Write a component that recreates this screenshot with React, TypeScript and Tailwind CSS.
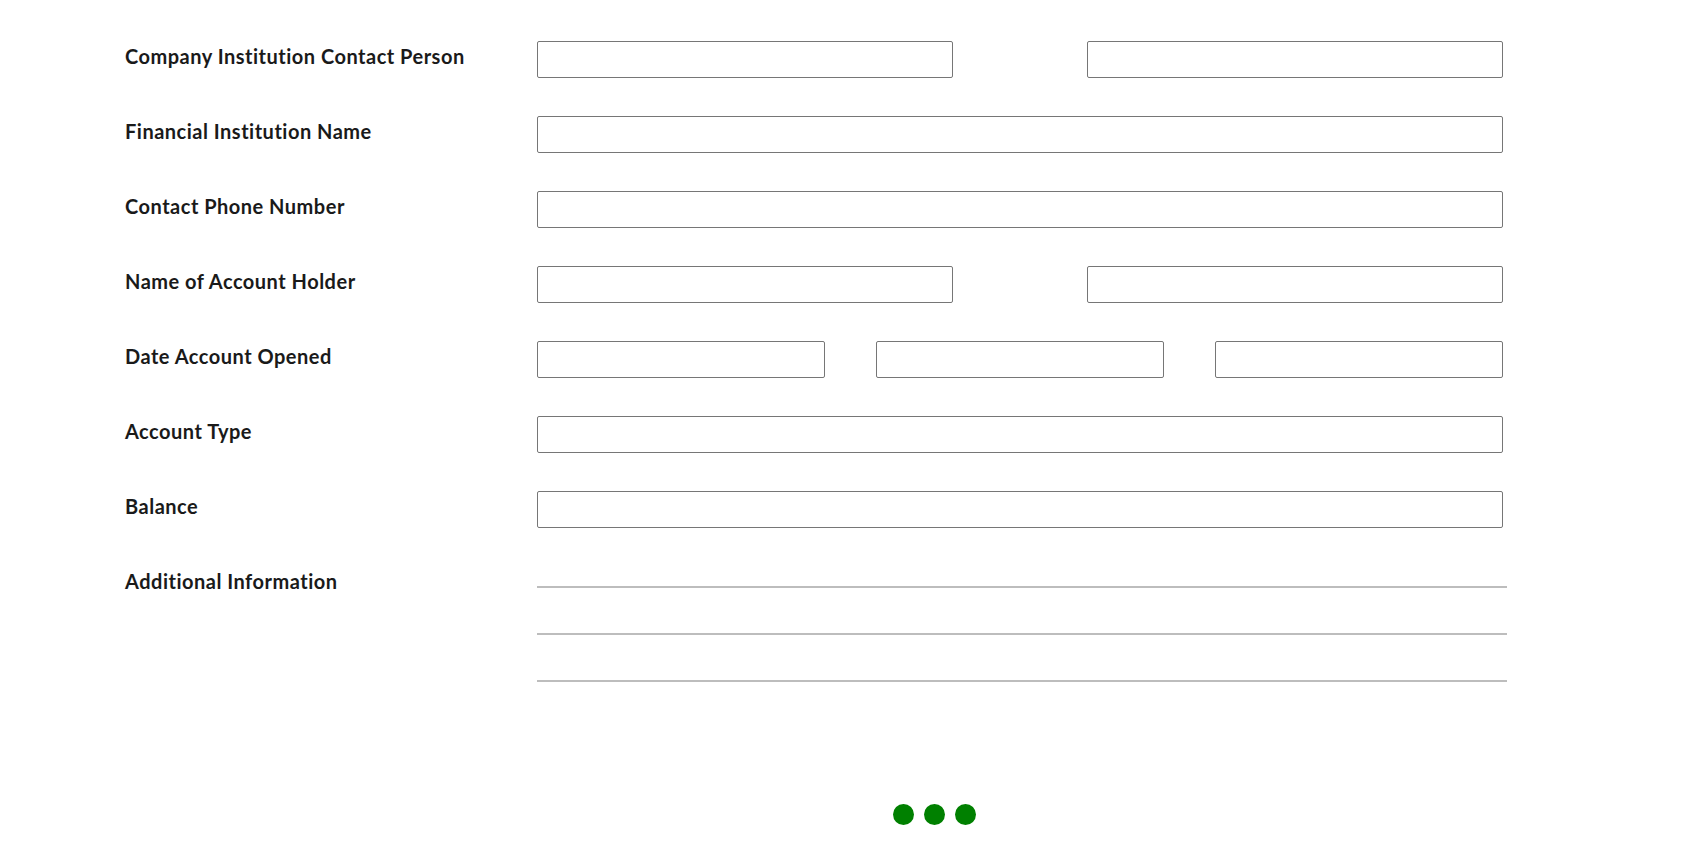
import React from "react";

const labelCls =
  "w-[412px] shrink-0 pt-[1px] text-[20px] leading-[28px] tracking-[0.5px] font-bold text-[#1a1a1a]";
const inputCls =
  "h-[37px] border border-[#767676] rounded-[2px] bg-white";

function Row({ label, children }: { label: string; children: React.ReactNode }) {
  return (
    <div className="flex items-start">
      <div className={labelCls}>{label}</div>
      <div className="w-[966px]">{children}</div>
    </div>
  );
}

function Full() {
  return <div className={`${inputCls} w-full`} />;
}

function Two() {
  return (
    <div className="flex justify-between">
      <div className={`${inputCls} w-[416px]`} />
      <div className={`${inputCls} w-[416px]`} />
    </div>
  );
}

function Three() {
  return (
    <div className="flex gap-[51px]">
      <div className={`${inputCls} w-[288px]`} />
      <div className={`${inputCls} w-[288px]`} />
      <div className={`${inputCls} w-[288px]`} />
    </div>
  );
}

export default function App() {
  return (
    <div
      className="min-h-[856px] bg-white pt-[41px] pl-[125px]"
      style={{ fontFamily: "Lato, 'Open Sans', sans-serif" }}
    >
      <div className="flex flex-col gap-[38px]">
        <Row label="Company Institution Contact Person">
          <Two />
        </Row>
        <Row label="Financial Institution Name">
          <Full />
        </Row>
        <Row label="Contact Phone Number">
          <Full />
        </Row>
        <Row label="Name of Account Holder">
          <Two />
        </Row>
        <Row label="Date Account Opened">
          <Three />
        </Row>
        <Row label="Account Type">
          <Full />
        </Row>
        <Row label="Balance">
          <Full />
        </Row>
        <div className="flex items-start">
          <div className={labelCls}>Additional Information</div>
          <div className="w-[970px] flex flex-col">
            <div className="h-[22px] border-b-2 border-[#bdbdbd]" />
            <div className="h-[47px] border-b-2 border-[#bdbdbd]" />
            <div className="h-[47px] border-b-2 border-[#bdbdbd]" />
          </div>
        </div>
      </div>

      {/* loading dots */}
      <div className="mt-[122px] pl-[768px] flex gap-[10px]">
        <span className="w-[21px] h-[21px] rounded-full bg-[#008000]" />
        <span className="w-[21px] h-[21px] rounded-full bg-[#008000]" />
        <span className="w-[21px] h-[21px] rounded-full bg-[#008000]" />
      </div>
    </div>
  );
}
